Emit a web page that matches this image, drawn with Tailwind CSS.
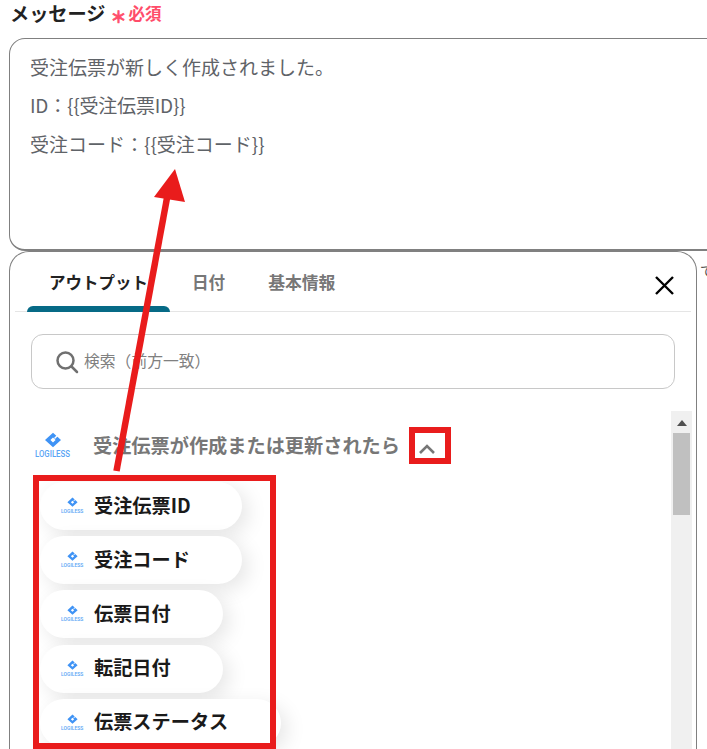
<!DOCTYPE html>
<html lang="ja">
<head>
<meta charset="UTF-8">
<title>メッセージ</title>
<script src="https://cdn.jsdelivr.net/npm/@tailwindcss/browser@4"></script>
</head>
<body class="bg-white">
<div class="relative w-[707px] h-[749px] overflow-hidden font-['Noto_Sans_CJK_JP',sans-serif]">
 <!-- ラベル -->
 <div class="flex items-center h-[27px] pl-[10px]">
  <span class="text-[19.2px] font-bold leading-[27px] text-[#222]">メッセージ</span>
  <span class="ml-[5px] mt-[6px] text-[16px] font-bold leading-[21px] text-[#ff4d6a] [-webkit-text-stroke:0.7px_#ff4d6a]">＊</span>
  <span class="ml-[2px] text-[16.5px] font-bold leading-[27px] text-[#ff4d6a]">必須</span>
 </div>

 <!-- テキストエリア -->
 <div class="mt-[11px] ml-[9px] w-[720px] h-[213px] rounded-[16px] border border-[#808080] border-b-2 pl-[20px] pt-[9px] text-[19px] leading-[38.3px] text-[#5f6368]">
  <p>受注伝票が新しく作成されました。</p>
  <p class="tracking-[-0.2px]">ID：{{受注伝票ID}}</p>
  <p>受注コード：{{受注コード}}</p>
 </div>

 <!-- 右側の見切れ -->
 <div class="absolute left-[700px] top-[260px] w-[7px] overflow-hidden text-[14px] leading-[20px] text-[#555]">で</div>

 <!-- アウトプットパネル -->
 <div class="ml-[9px] w-[688px] h-[520px] rounded-t-[20px] border border-b-0 border-[#808080] bg-white">
  <div class="relative mx-[5px] flex justify-between h-[60px] border-b border-[#e5e5e5]">
   <div class="flex pl-[12px]">
    <div class="relative px-[22px] pt-[17px] text-[16.5px] leading-[26px] font-bold text-[#222]">
     アウトプット
     <div class="absolute left-0 right-0 bottom-[-1px] h-[6px] rounded-t-[6px] bg-[#066a86]"></div>
    </div>
    <div class="px-[22px] pt-[17px] text-[16.6px] leading-[26px] font-bold text-[#777]">日付</div>
    <div class="px-[21px] pt-[17px] text-[16.8px] leading-[26px] font-bold text-[#777]">基本情報</div>
   </div>
   <div class="pt-[23px] pr-[16px]">
    <svg width="21" height="21" viewBox="0 0 21 21" fill="none" stroke="#000" stroke-width="2.4"><path d="M2 2 L19 19 M19 2 L2 19"/></svg>
   </div>
  </div>

  <!-- 検索 -->
  <div class="mt-[22px] mx-[21px] h-[55px] rounded-[12px] border border-[#c8c8c8] flex items-center pl-[23px]">
   <svg width="24" height="24" viewBox="0 0 24 24" fill="none" stroke="#707070" stroke-width="2.5" stroke-linecap="round"><circle cx="10.5" cy="10.5" r="8"/><path d="M16.5 16.5 L22 22"/></svg>
   <span class="ml-[5px] -mt-[2px] text-[15.8px] text-[#808080]">検索（前方一致）</span>
  </div>

  <div class="mt-[22px] flex h-[340px]">
   <div class="flex-1 min-w-0">
    <!-- トリガー見出し -->
    <div class="flex items-start pl-[25px] pt-[21px] h-[71px]">
     <svg width="36" height="28" viewBox="0 0 36 28" class="shrink-0">
      <path fill-rule="evenodd" d="M18 .7 L26 8 L18 15.3 L10 8 Z M18 5.6 L15.4 8 L18 10.4 L20.6 8 Z" fill="#3f93f5"/>
      <path d="M19.5 6.5 L23.5 2.5" stroke="#fff" stroke-width="1.5"/>
      <text x="0" y="25" font-family="Roboto, sans-serif" font-size="8.5" font-weight="500" fill="#5aa5f5" textLength="35" lengthAdjust="spacingAndGlyphs">LOGILESS</text>
     </svg>
     <span class="ml-[22px] -mt-[1px] text-[19.2px] leading-[28px] font-bold text-[#777]">受注伝票が作成または更新されたら</span>
     <svg width="16" height="10" viewBox="0 0 16 10" fill="none" stroke="#777" stroke-width="2.6" class="ml-[19px] mt-[12px]"><path d="M1 9 L8 2 L15 9"/></svg>
    </div>
    <!-- 項目 -->
    <div class="flex flex-col items-start gap-[6.2px] pl-[30px]">
     <div class="flex items-center w-[202px] h-[48px] shrink-0 rounded-full bg-white shadow-[6px_6px_20px_rgba(0,0,0,0.1)] pl-[21px]">
      <svg width="23" height="18" viewBox="0 0 36 28" class="shrink-0">
       <path fill-rule="evenodd" d="M18 .7 L26 8 L18 15.3 L10 8 Z M18 5.6 L15.4 8 L18 10.4 L20.6 8 Z" fill="#3f93f5"/>
       <path d="M19.5 6.5 L23.5 2.5" stroke="#fff" stroke-width="1.5"/>
       <text x="0" y="25" font-family="Roboto, sans-serif" font-size="8.5" font-weight="500" fill="#5aa5f5" textLength="35" lengthAdjust="spacingAndGlyphs">LOGILESS</text>
      </svg>
      <span class="ml-[10px] -mt-[2px] text-[19.2px] font-bold text-[#1a1a1a]">受注伝票ID</span>
     </div>
     <div class="flex items-center w-[202px] h-[48px] shrink-0 rounded-full bg-white shadow-[6px_6px_20px_rgba(0,0,0,0.1)] pl-[21px]">
      <svg width="23" height="18" viewBox="0 0 36 28" class="shrink-0">
       <path fill-rule="evenodd" d="M18 .7 L26 8 L18 15.3 L10 8 Z M18 5.6 L15.4 8 L18 10.4 L20.6 8 Z" fill="#3f93f5"/>
       <path d="M19.5 6.5 L23.5 2.5" stroke="#fff" stroke-width="1.5"/>
       <text x="0" y="25" font-family="Roboto, sans-serif" font-size="8.5" font-weight="500" fill="#5aa5f5" textLength="35" lengthAdjust="spacingAndGlyphs">LOGILESS</text>
      </svg>
      <span class="ml-[10px] -mt-[2px] text-[19.2px] font-bold text-[#1a1a1a]">受注コード</span>
     </div>
     <div class="flex items-center w-[183px] h-[48px] shrink-0 rounded-full bg-white shadow-[6px_6px_20px_rgba(0,0,0,0.1)] pl-[21px]">
      <svg width="23" height="18" viewBox="0 0 36 28" class="shrink-0">
       <path fill-rule="evenodd" d="M18 .7 L26 8 L18 15.3 L10 8 Z M18 5.6 L15.4 8 L18 10.4 L20.6 8 Z" fill="#3f93f5"/>
       <path d="M19.5 6.5 L23.5 2.5" stroke="#fff" stroke-width="1.5"/>
       <text x="0" y="25" font-family="Roboto, sans-serif" font-size="8.5" font-weight="500" fill="#5aa5f5" textLength="35" lengthAdjust="spacingAndGlyphs">LOGILESS</text>
      </svg>
      <span class="ml-[10px] -mt-[2px] text-[19.2px] font-bold text-[#1a1a1a]">伝票日付</span>
     </div>
     <div class="flex items-center w-[183px] h-[48px] shrink-0 rounded-full bg-white shadow-[6px_6px_20px_rgba(0,0,0,0.1)] pl-[21px]">
      <svg width="23" height="18" viewBox="0 0 36 28" class="shrink-0">
       <path fill-rule="evenodd" d="M18 .7 L26 8 L18 15.3 L10 8 Z M18 5.6 L15.4 8 L18 10.4 L20.6 8 Z" fill="#3f93f5"/>
       <path d="M19.5 6.5 L23.5 2.5" stroke="#fff" stroke-width="1.5"/>
       <text x="0" y="25" font-family="Roboto, sans-serif" font-size="8.5" font-weight="500" fill="#5aa5f5" textLength="35" lengthAdjust="spacingAndGlyphs">LOGILESS</text>
      </svg>
      <span class="ml-[10px] -mt-[2px] text-[19.2px] font-bold text-[#1a1a1a]">転記日付</span>
     </div>
     <div class="flex items-center w-[241px] h-[48px] shrink-0 rounded-full bg-white shadow-[6px_6px_20px_rgba(0,0,0,0.1)] pl-[21px]">
      <svg width="23" height="18" viewBox="0 0 36 28" class="shrink-0">
       <path fill-rule="evenodd" d="M18 .7 L26 8 L18 15.3 L10 8 Z M18 5.6 L15.4 8 L18 10.4 L20.6 8 Z" fill="#3f93f5"/>
       <path d="M19.5 6.5 L23.5 2.5" stroke="#fff" stroke-width="1.5"/>
       <text x="0" y="25" font-family="Roboto, sans-serif" font-size="8.5" font-weight="500" fill="#5aa5f5" textLength="35" lengthAdjust="spacingAndGlyphs">LOGILESS</text>
      </svg>
      <span class="ml-[10px] -mt-[2px] text-[19.2px] font-bold text-[#1a1a1a]">伝票ステータス</span>
     </div>
    </div>
   </div>
   <!-- スクロールバー -->
   <div class="w-[21px] mr-[4px] shrink-0 bg-[#f0f0f0] px-[2px]">
    <div class="h-[22px] flex justify-center pt-[9px]">
     <svg width="10" height="6" viewBox="0 0 10 6"><path d="M5 0 L10 6 L0 6 Z" fill="#505050"/></svg>
    </div>
    <div class="h-[82px] bg-[#c0c0c0]"></div>
   </div>
  </div>
 </div>

 <!-- 赤い注釈 -->
 <div class="absolute left-[33px] top-[475px] w-[243px] h-[274px] border-[6px] border-[#e91c1c]"></div>
 <div class="absolute left-[409px] top-[427px] w-[42px] h-[37px] border-[6px] border-[#e91c1c]"></div>
 <svg class="absolute left-0 top-0" width="707" height="749" viewBox="0 0 707 749">
  <path d="M116.5 471 L167 198" stroke="#e91c1c" stroke-width="6.5" fill="none"/>
  <path d="M175 169 L154 197 L185 202 Z" fill="#e91c1c"/>
 </svg>
</div>
</body>
</html>
